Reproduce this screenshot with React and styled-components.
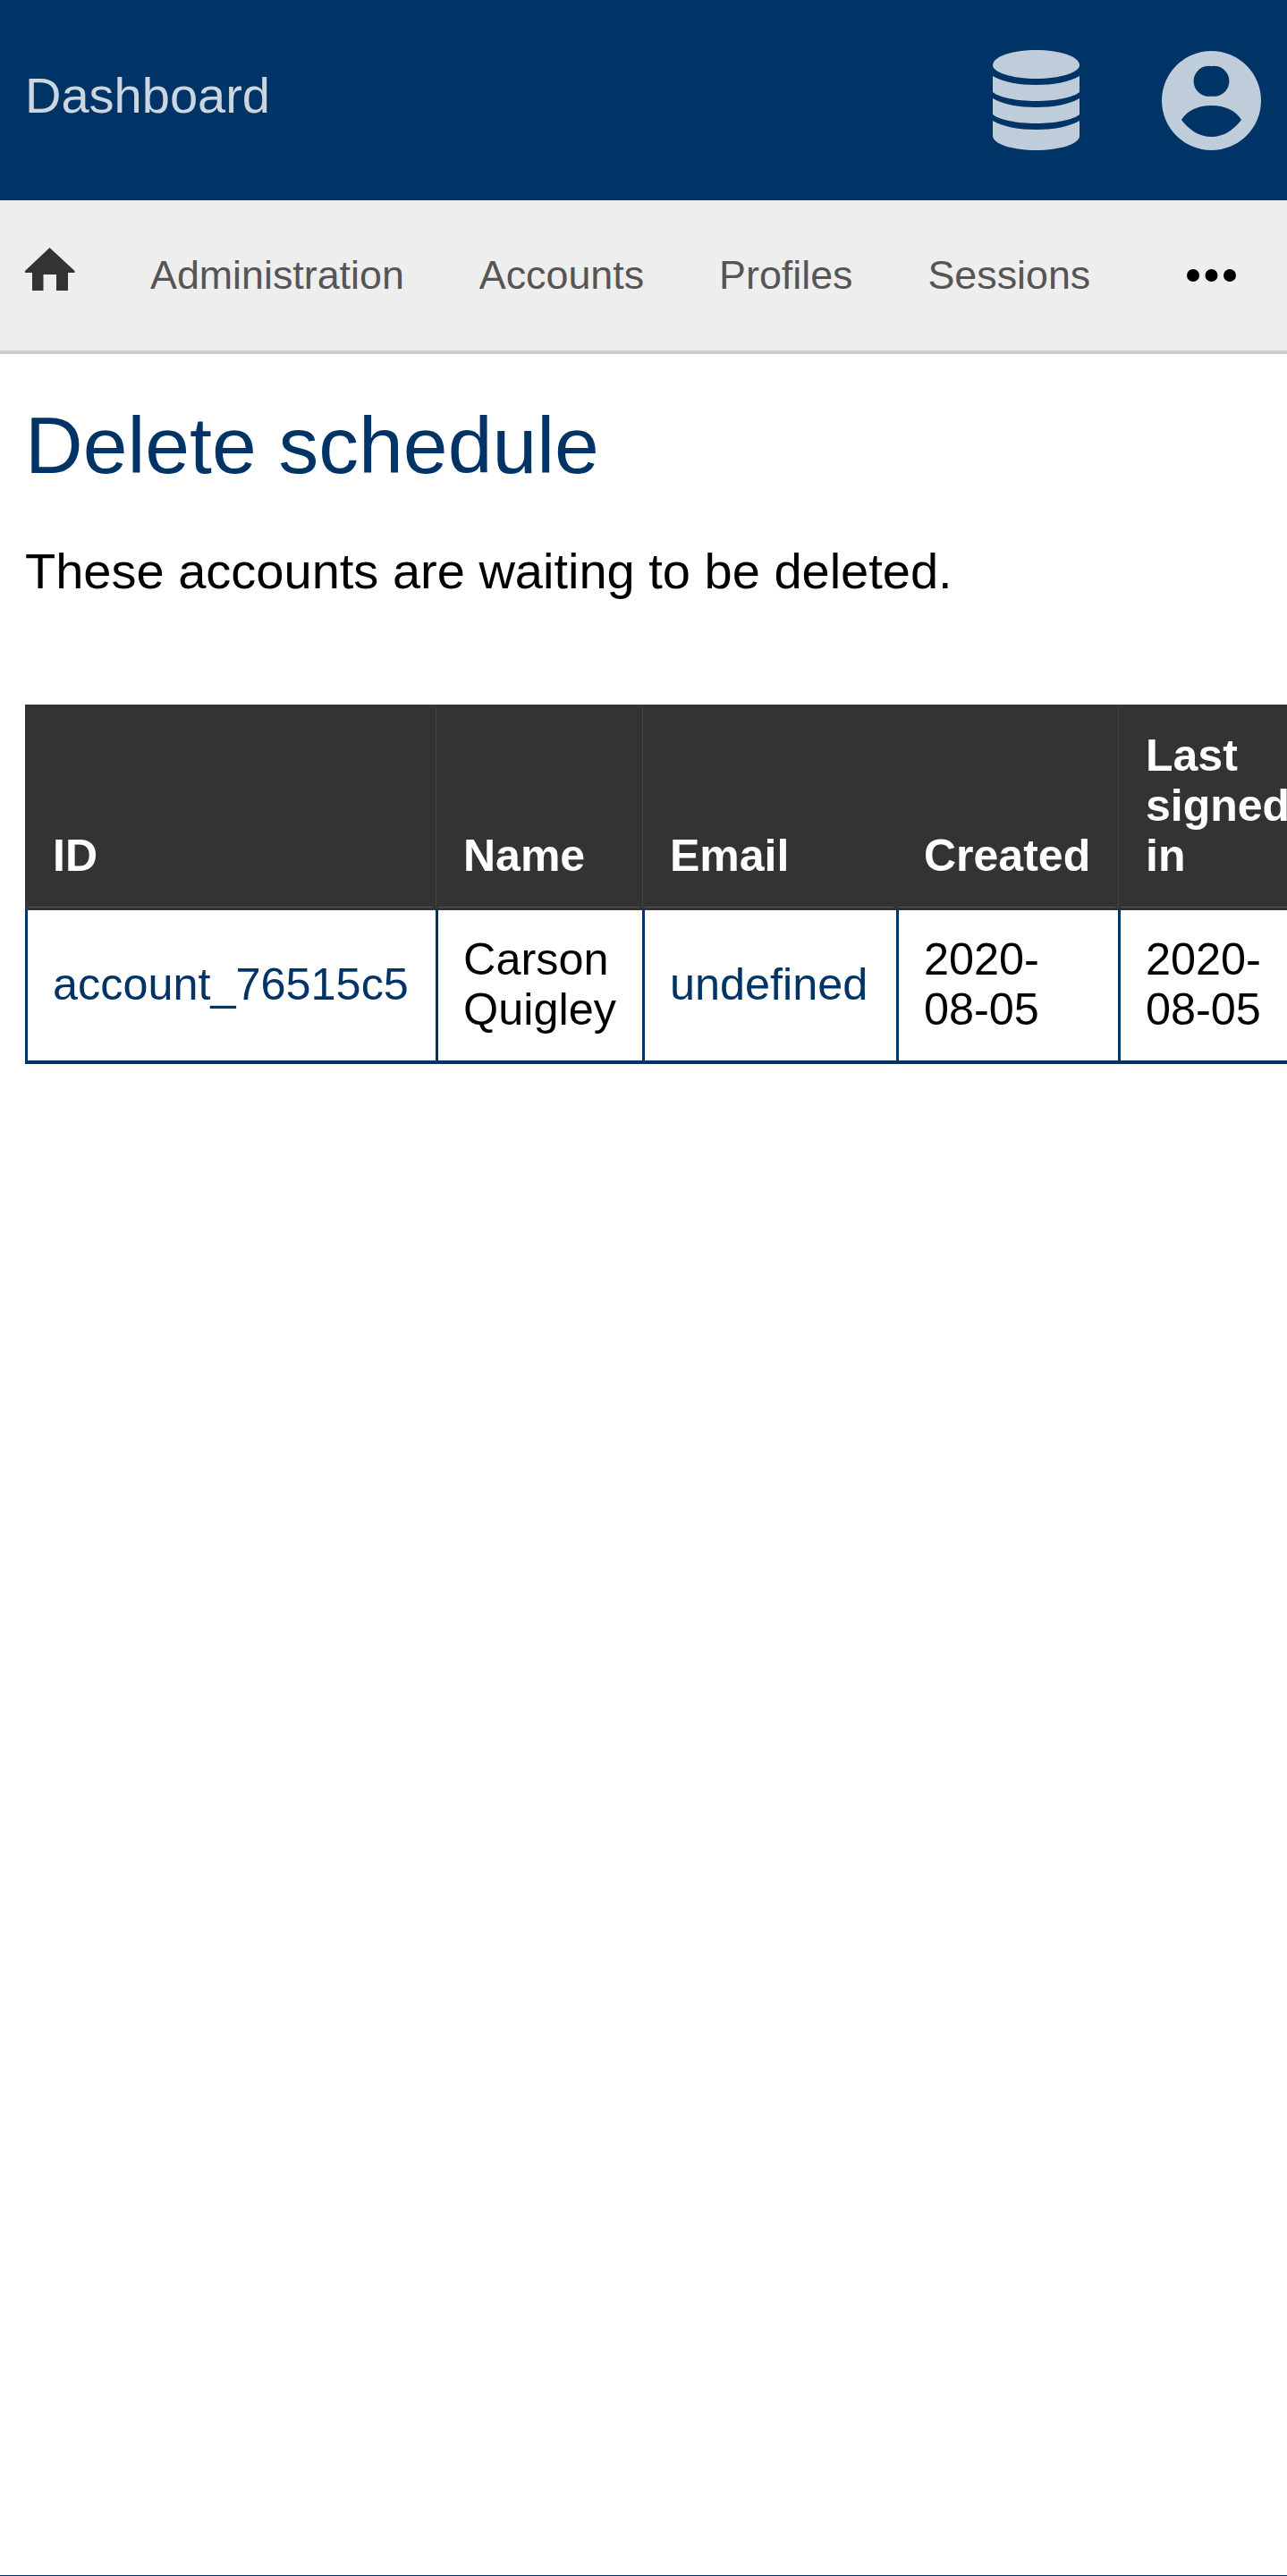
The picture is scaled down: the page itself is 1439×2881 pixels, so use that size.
import React from "react";
import styled, { createGlobalStyle } from "styled-components";

const GlobalStyle = createGlobalStyle`
  html, body {
    margin: 0;
    padding: 0;
    background: #fff;
  }
  body {
    font-family: "Liberation Sans", Arial, sans-serif;
    font-size: 50px;
    color: #000;
  }
`;

const Page = styled.div`
  min-height: 100vh;
  display: flex;
  flex-direction: column;
  overflow: hidden;
`;

const Header = styled.header`
  height: 224px;
  background: #003366;
  display: flex;
  align-items: center;
  justify-content: space-between;
  padding: 0 29px 0 28px;
`;

const Brand = styled.a`
  font-size: 56px;
  color: #ccd6e0;
  margin-bottom: 12px;
`;

const HeaderIcons = styled.div`
  display: flex;
  align-items: center;
  gap: 92px;
`;

const Nav = styled.nav`
  height: 168px;
  background: #eeeeee;
  border-bottom: 4px solid #cccccc;
  display: flex;
  align-items: center;
  gap: 84px;
  padding: 0 57px 0 28px;
`;

const NavLink = styled.a`
  font-size: 44.8px;
  color: #555555;
  margin-bottom: 2px;
`;

const HomeIcon = styled.svg`
  display: block;
  margin-top: -14px;
`;

const MoreIcon = styled.svg`
  display: block;
  margin-left: auto;
`;

const Main = styled.main`
  flex: 1;
  padding: 0 0 0 28px;
`;

const Title = styled.h1`
  font-size: 89.5px;
  font-weight: normal;
  line-height: 102px;
  color: #003366;
  margin: 51px 0 0;
`;

const Intro = styled.p`
  font-size: 56px;
  line-height: 64px;
  margin: 58px 0 0;
`;

const TableWrap = styled.div`
  margin-top: 117px;
`;

const Table = styled.table`
  border-collapse: separate;
  border-spacing: 0;
  table-layout: fixed;
  width: 1447px;
`;

const HeadCell = styled.th`
  color: #fff;
  font-weight: bold;
  text-align: left;
  vertical-align: bottom;
  line-height: 56px;
  padding: 26px 28px 30px;
  border: 3px solid transparent;
  width: ${(p) => p.$width}px;
  box-sizing: border-box;
  background-color: #333333;
  background-clip: border-box;
  background-origin: border-box;
  background-repeat: no-repeat;
  background-image: ${(p) => (p.$divider ? "linear-gradient(#444444, #444444)" : "none")};
  background-size: 1px calc(100% - 6px);
  background-position: 0 3px;
  box-shadow: inset 0 -1px 0 #555555;
`;

const Cell = styled.td`
  font-size: 50.4px;
  line-height: 56px;
  padding: 27px 28px 29px;
  border-left: 3px solid #003366;
  border-bottom: 4px solid #003366;
  box-sizing: border-box;
`;

const TableLink = styled.a`
  color: #003366;
`;

const Footer = styled.footer`
  height: 1px;
  background: #003366;
`;

const columns = [
  { label: "ID", width: 459 },
  { label: "Name", width: 231 },
  { label: "Email", width: 284 },
  { label: "Created", width: 248 },
  { label: "Last signed in", width: 225 },
];

function DatabaseIcon() {
  return (
    <svg width="97" height="112" viewBox="0 0 97 112" fill="#bfccd9">
      <path d="M0 17C0 7 22 0 48.5 0S97 7 97 17C97 25 75 32 48.5 32S0 25 0 17Z" />
      <path d="M0 29C12 36 30 39 48.5 39S85 36 97 29V47C90 53 70 57 48.5 57S7 53 0 47Z" />
      <path d="M0 54C12 61 30 64 48.5 64S85 61 97 54V72C90 78 70 82 48.5 82S7 78 0 72Z" />
      <path d="M0 79C12 86 30 89 48.5 89S85 86 97 79V96C97 105 75 112 48.5 112S0 105 0 96Z" />
    </svg>
  );
}

function UserIcon() {
  return (
    <svg width="111" height="111" viewBox="0 0 111 111" fill="#bfccd9">
      <path
        fillRule="evenodd"
        d="M55.5 0A55.5 55.5 0 1 1 55.5 111A55.5 55.5 0 1 1 55.5 0ZM55.5 17A17 17 0 1 0 55.5 50.5A17 17 0 1 0 55.5 17ZM22 77C28 67 40 61 55.5 61S83 67 89 77C81 88 69 96 55.5 96S30 88 22 77Z"
      />
    </svg>
  );
}

export default function App() {
  return (
    <Page>
      <GlobalStyle />
      <Header>
        <Brand>Dashboard</Brand>
        <HeaderIcons>
          <DatabaseIcon />
          <UserIcon />
        </HeaderIcons>
      </Header>
      <Nav>
        <HomeIcon width="56" height="48" viewBox="0 0 56 48" fill="#333333">
          <path d="M27.5 0L55.5 26V28H48V48H35V30H20.5V48H8V28H0V26Z" />
        </HomeIcon>
        <NavLink>Administration</NavLink>
        <NavLink>Accounts</NavLink>
        <NavLink>Profiles</NavLink>
        <NavLink>Sessions</NavLink>
        <MoreIcon width="55" height="14" viewBox="0 0 55 14" fill="#000">
          <circle cx="7" cy="7" r="7" />
          <circle cx="27.5" cy="7" r="7" />
          <circle cx="48" cy="7" r="7" />
        </MoreIcon>
      </Nav>
      <Main>
        <Title>Delete schedule</Title>
        <Intro>These accounts are waiting to be deleted.</Intro>
        <TableWrap>
          <Table>
            <thead>
              <tr>
                {columns.map((col, i) => (
                  <HeadCell key={col.label} $width={col.width} $divider={i > 0 && i !== 3}>
                    {col.label}
                  </HeadCell>
                ))}
              </tr>
            </thead>
            <tbody>
              <tr>
                <Cell>
                  <TableLink>account_76515c5</TableLink>
                </Cell>
                <Cell>Carson Quigley</Cell>
                <Cell>
                  <TableLink>undefined</TableLink>
                </Cell>
                <Cell>2020-08-05</Cell>
                <Cell>2020-08-05</Cell>
              </tr>
            </tbody>
          </Table>
        </TableWrap>
      </Main>
      <Footer />
    </Page>
  );
}
